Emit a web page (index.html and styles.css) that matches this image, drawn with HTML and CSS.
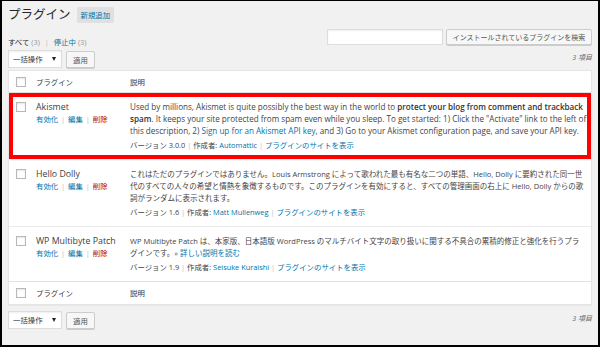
FILE: index.html
```html
<!DOCTYPE html>
<html lang="ja">
<head>
    <meta charset="UTF-8">
    <meta name="viewport" content="width=device-width, initial-scale=1.0">
    <title>プラグイン</title>
    <link rel="stylesheet" href="styles.css">
</head>
<body>
<div class="frame">
    <div class="title-row">
        <h1>プラグイン</h1>
        <a class="add-new">新規追加</a>
    </div>

    <div class="filter-row">
        <div class="subsubsub">
            <span class="current">すべて</span> <span class="num">(3)</span>
            <span class="sep">|</span>
            <a>停止中</a> <span class="num">(3)</span>
        </div>
        <div class="search-box">
            <input type="text">
            <button class="btn">インストールされているプラグインを検索</button>
        </div>
    </div>

    <div class="tablenav">
        <div class="bulk">
            <div class="select">一括操作 <span class="arrow"></span></div>
            <button class="btn apply">適用</button>
        </div>
        <span class="count">3 項目</span>
    </div>

    <div class="plugins">
        <div class="row head">
            <span class="cb"></span>
            <span>プラグイン</span>
            <span>説明</span>
        </div>

        <div class="row plugin highlight">
            <div><span class="cb"></span></div>
            <div>
                <div class="name">Akismet</div>
                <div class="actions"><a>有効化</a> <i>|</i> <a>編集</a> <i>|</i> <a class="delete">削除</a></div>
            </div>
            <div class="desc">
                <p class="en">Used by millions, Akismet is quite possibly the best way in the world to <strong>protect your blog from comment and trackback spam</strong>. It keeps your site protected from spam even while you sleep. To get started: 1) Click the "Activate" link to the left of this description, 2) <a>Sign up for an Akismet API key</a>, and 3) Go to your Akismet configuration page, and save your API key.</p>
                <div class="meta">バージョン 3.0.0 <i>|</i> 作成者: <a>Automattic</a> <i>|</i> <a>プラグインのサイトを表示</a></div>
            </div>
        </div>

        <div class="row plugin">
            <div><span class="cb"></span></div>
            <div>
                <div class="name">Hello Dolly</div>
                <div class="actions"><a>有効化</a> <i>|</i> <a>編集</a> <i>|</i> <a class="delete">削除</a></div>
            </div>
            <div class="desc">
                <p>これはただのプラグインではありません。Louis Armstrong によって歌われた最も有名な二つの単語、Hello, Dolly に要約された同一世代のすべての人々の希望と情熱を象徴するものです。このプラグインを有効にすると、すべての管理画面の右上に Hello, Dolly からの歌詞がランダムに表示されます。</p>
                <div class="meta">バージョン 1.6 <i>|</i> 作成者: <a>Matt Mullenweg</a> <i>|</i> <a>プラグインのサイトを表示</a></div>
            </div>
        </div>

        <div class="row plugin">
            <div><span class="cb"></span></div>
            <div>
                <div class="name">WP Multibyte Patch</div>
                <div class="actions"><a>有効化</a> <i>|</i> <a>編集</a> <i>|</i> <a class="delete">削除</a></div>
            </div>
            <div class="desc">
                <p>WP Multibyte Patch は、本家版、日本語版 WordPress のマルチバイト文字の取り扱いに関する不具合の累積的修正と強化を行うプラ<br>グインです。<a>» 詳しい説明を読む</a></p>
                <div class="meta">バージョン 1.9 <i>|</i> 作成者: <a>Seisuke Kuraishi</a> <i>|</i> <a>プラグインのサイトを表示</a></div>
            </div>
        </div>

        <div class="row foot">
            <span class="cb"></span>
            <span>プラグイン</span>
            <span>説明</span>
        </div>
    </div>

    <div class="tablenav bottom">
        <div class="bulk">
            <div class="select">一括操作 <span class="arrow"></span></div>
            <button class="btn apply">適用</button>
        </div>
        <span class="count">3 項目</span>
    </div>
</div>
</body>
</html>
```

FILE: styles.css
```css
body {
    margin: 0;
    font-family: "Open Sans", "Noto Sans CJK JP", sans-serif;
    font-size: 7.4px;
    line-height: 12px;
    color: #444;
}
a {
    color: #0073aa;
}
i {
    font-style: normal;
    color: #bbb;
}
.frame {
    box-sizing: border-box;
    height: 347px;
    background-color: #f1f1f1;
    border: 2px solid #000;
    border-top-width: 1px;
    padding: 6px 6px 0 6px;
}
.title-row {
    display: flex;
    align-items: center;
    height: 16px;
}
h1 {
    margin: 0;
    font-size: 12.5px;
    font-weight: 400;
    line-height: 16px;
    color: #23282d;
}
.add-new {
    margin-left: 6px;
    padding: 0 4px;
    height: 16px;
    line-height: 16px;
    background-color: #e0e0e0;
    border-radius: 2px;
}
.filter-row {
    display: flex;
    justify-content: space-between;
    margin-top: 6px;
    height: 19px;
}
.subsubsub {
    align-self: flex-end;
    color: #23282d;
}
.subsubsub .num {
    color: #999;
}
.subsubsub .sep {
    color: #bbb;
    margin: 0 3px;
}
.search-box {
    display: flex;
    height: 16px;
}
.search-box input {
    box-sizing: border-box;
    width: 116px;
    height: 16px;
    margin: 0;
    border: 1px solid #ddd;
    background-color: #fff;
    box-shadow: inset 0 1px 2px rgba(0, 0, 0, .07);
}
.btn {
    box-sizing: border-box;
    margin: 0 0 0 3px;
    padding: 0 4px;
    height: 16px;
    font-family: inherit;
    font-size: 7.4px;
    color: #555;
    background-color: #f7f7f7;
    border: 1px solid #ccc;
    border-radius: 2px;
    box-shadow: 0 1px 0 #ccc;
}
.search-box .btn {
    width: 146px;
    font-size: 7px;
}
.tablenav {
    display: flex;
    justify-content: space-between;
    margin-top: 2px;
    height: 18px;
}
.tablenav.bottom {
    margin-top: 6px;
}
.bulk {
    display: flex;
}
.select {
    box-sizing: border-box;
    display: flex;
    align-items: center;
    justify-content: space-between;
    width: 54px;
    height: 18px;
    padding: 0 5px 0 4px;
    color: #32373c;
    background-color: #fff;
    border: 1px solid #ddd;
    box-shadow: inset 0 1px 2px rgba(0, 0, 0, .07);
}
.arrow {
    width: 0;
    height: 0;
    border-left: 2.5px solid transparent;
    border-right: 2.5px solid transparent;
    border-top: 4px solid #222;
}
.apply {
    width: 29px;
    height: 17px;
    margin-left: 4px;
    margin-top: 1px;
}
.count {
    margin-top: 2px;
    font-style: italic;
    font-size: 7px;
    color: #666;
}
.plugins {
    margin-top: 2px;
    background-color: #fff;
    border: 1px solid #e5e5e5;
    box-shadow: 0 1px 1px rgba(0, 0, 0, .04);
}
.row {
    display: grid;
    grid-template-columns: 27px 94px 1fr;
}
.head, .foot {
    align-items: center;
    height: 21px;
    color: #32373c;
}
.head {
    border-bottom: 1px solid #e1e1e1;
}
.foot {
    border-top: 1px solid #e1e1e1;
    height: 22px;
}
.cb {
    box-sizing: border-box;
    display: block;
    width: 10px;
    height: 10px;
    margin-left: 7px;
    border: 1px solid #b4b9be;
    background-color: #fff;
    box-shadow: inset 0 1px 2px rgba(0, 0, 0, .1);
}
.plugin {
    padding: 8px 0 8px 0;
}
.plugin + .plugin {
    border-top: 1px solid #ebebeb;
}
.plugin .cb {
    margin-top: 1px;
}
.highlight {
    outline: 4px solid #f00;
    outline-offset: -4px;
}
.name {
    font-size: 8.8px;
    color: #3a3f44;
}
.actions .delete {
    color: #a00;
}
.actions i {
    margin: 0 1px;
}
.desc {
    padding-right: 3px;
    font-size: 7.5px;
}
.desc p {
    margin: 0;
}
.desc p.en {
    font-size: 8.1px;
}
.desc strong {
    font-weight: 600;
    color: #333;
}
.meta {
    margin-top: 2px;
    font-size: 7.4px;
}
```
